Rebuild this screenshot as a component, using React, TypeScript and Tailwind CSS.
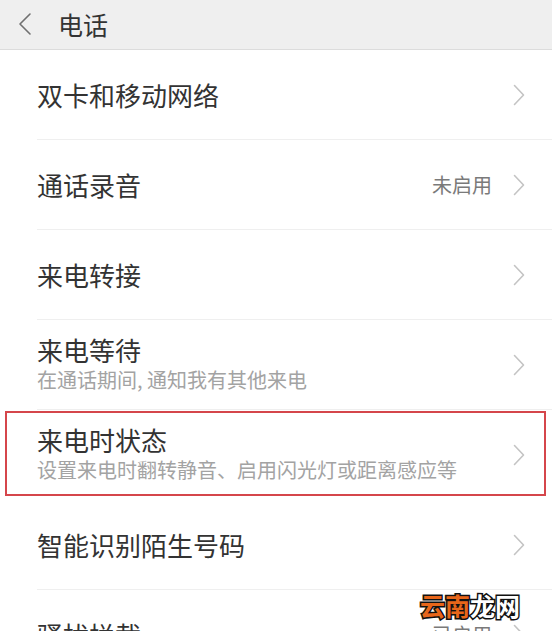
import React from "react";

const Chevron = () => (
  <svg width="12" height="22" viewBox="0 0 12 22" fill="none" className="shrink-0">
    <path d="M1.5 1.5 L10.5 11 L1.5 20.5" stroke="#c4c4c4" strokeWidth="1.6" strokeLinecap="round" strokeLinejoin="round" />
  </svg>
);

type RowProps = {
  title: string;
  sub?: string;
  value?: string;
  noBorder?: boolean;
  children?: React.ReactNode;
};

const Row = ({ title, sub, value, noBorder, children }: RowProps) => (
  <div className="relative h-[90px] shrink-0 pl-[37px]">
    <div className={`flex h-full items-center pr-[27px] ${noBorder ? "" : "border-b border-[#efefef]"}`}>
      <div className="flex flex-1 flex-col">
        <div className="text-[26px] leading-[30px] text-[#333333]">{title}</div>
        {sub && <div className="text-[20px] leading-[30px] text-[#a3a3a3]">{sub}</div>}
      </div>
      {value && <div className="mr-[21px] text-[20px] leading-[28px] text-[#7a7a7a]">{value}</div>}
      <Chevron />
    </div>
    {children}
  </div>
);

export default function App() {
  return (
    <div
      className="relative flex h-[631px] w-[552px] flex-col overflow-hidden bg-white"
      style={{ fontFamily: '"Noto Sans CJK SC", "Noto Sans", sans-serif' }}
    >
      <div className="flex h-[50px] shrink-0 items-center border-b border-[#dcdcdc] bg-[#efefef]">
        <svg width="16" height="24" viewBox="0 0 16 24" fill="none" className="ml-[17px] mb-[2px]">
          <path d="M13 2 L3 12 L13 22" stroke="#707070" strokeWidth="1.6" strokeLinecap="round" strokeLinejoin="round" />
        </svg>
        <div className="mb-[2px] ml-[25px] text-[25px] leading-[30px] text-[#333333]">电话</div>
      </div>
      <Row title="双卡和移动网络" />
      <Row title="通话录音" value="未启用" />
      <Row title="来电转接" />
      <Row title="来电等待" sub="在通话期间, 通知我有其他来电" />
      <Row title="来电时状态" sub="设置来电时翻转静音、启用闪光灯或距离感应等" noBorder>
        <div className="pointer-events-none absolute bottom-[4px] left-[5px] right-[6px] top-[1px] border-2 border-[#d5464b]" />
      </Row>
      <Row title="智能识别陌生号码" />
      <Row title="骚扰拦截" value="已启用" />
      <div
        className="absolute left-[420px] top-[590px] flex text-[25px] font-bold leading-[30px] [-webkit-text-stroke:3px_#111] [paint-order:stroke_fill]"
      >
        <span className="text-[#e8661a]">云南</span>
        <span className="text-white">龙网</span>
      </div>
    </div>
  );
}
